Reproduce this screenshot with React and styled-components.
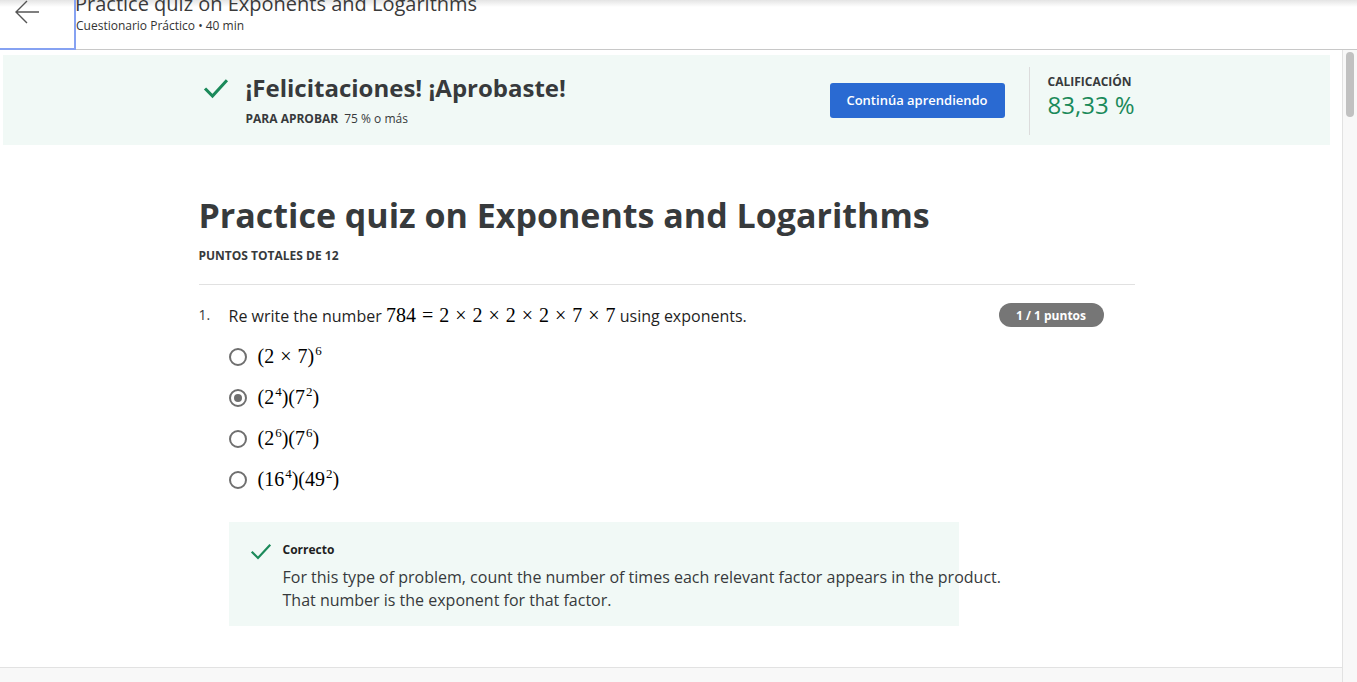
import React from "react";
import styled, { createGlobalStyle } from "styled-components";

const GlobalStyle = createGlobalStyle`
  html, body {
    margin: 0;
    padding: 0;
    height: 682px;
    overflow: hidden;
    background: #ffffff;
    font-family: "Open Sans", "Liberation Sans", sans-serif;
    color: #1f1f1f;
  }
  * { box-sizing: border-box; }
`;

const Page = styled.div`
  width: 1357px;
  height: 682px;
  display: flex;
  flex-direction: column;
`;

const TopBar = styled.header`
  height: 50px;
  flex-shrink: 0;
  display: flex;
  border-bottom: 1px solid #c8c8c8;
  background: linear-gradient(#e4e4e4 0px, #ffffff 7px);
`;

const BackButton = styled.button`
  width: 76px;
  height: 50px;
  margin: 0;
  border: none;
  border-right: 2px solid #86a2f2;
  border-bottom: 2px solid #86a2f2;
  background: transparent;
  display: flex;
  align-items: center;
  justify-content: center;
  padding: 0 20px 24px 0;
  flex-shrink: 0;
`;

const TopInfo = styled.div`
  display: flex;
  flex-direction: column;
  margin-top: -8px;
`;

const TopTitle = styled.div`
  font-size: 20px;
  line-height: 24px;
  color: #3a3a3a;
  white-space: nowrap;
  margin-left: -1px;
`;

const TopSub = styled.div`
  margin-top: 2px;
  font-size: 12px;
  line-height: 16px;
  color: #333;
`;

const Body = styled.div`
  flex: 1;
  display: flex;
  min-height: 0;
`;

const Viewport = styled.div`
  flex: 1;
  display: flex;
  flex-direction: column;
  min-width: 0;
`;

const ScrollArea = styled.main`
  flex: 1;
  overflow: hidden;
  padding: 5px 12px 0 3px;
`;

const HTrack = styled.div`
  height: 15px;
  flex-shrink: 0;
  border-top: 1px solid #e2e2e2;
  background: #f8f8f8;
`;

const VTrack = styled.div`
  width: 15px;
  flex-shrink: 0;
  border-left: 1px solid #e2e2e2;
  background: #f8f8f8;
  padding: 2px 3px 0 3px;
`;

const VThumb = styled.div`
  width: 8px;
  height: 65px;
  border-radius: 4px;
  background: #c1c1c1;
`;

const Banner = styled.section`
  height: 90px;
  background: #f1f9f6;
`;

const Column = styled.div`
  width: 936px;
  margin: 0 auto;
`;

const BannerInner = styled(Column)`
  height: 100%;
  display: flex;
  align-items: center;
`;

const PassBlock = styled.div`
  display: flex;
  align-items: flex-start;
  flex: 1;
  margin-top: -1px;
`;

const CheckMark = ({ size = 28, stroke = 2.6 }) => (
  <svg width={size} height={size} viewBox="0 0 24 24" fill="none">
    <polyline
      points="3.5 12.5 9 18 20.5 5.5"
      stroke="#1b8a5a"
      strokeWidth={stroke}
      strokeLinecap="square"
    />
  </svg>
);

const CheckBox = styled.div`
  margin: 2px 16px 0 3px;
  display: flex;
`;

const PassText = styled.div`
  display: flex;
  flex-direction: column;
`;

const PassTitle = styled.h2`
  margin: 0;
  font-size: 24px;
  line-height: 30px;
  font-weight: 700;
  color: #373a3c;
`;

const PassReq = styled.div`
  margin-top: 8px;
  font-size: 12px;
  line-height: 16px;
  color: #373a3c;
  b {
    font-weight: 700;
    margin-right: 6px;
  }
`;

const PrimaryButton = styled.button`
  width: 175px;
  height: 35px;
  border: none;
  border-radius: 3px;
  background: #2a6ad2;
  color: #ffffff;
  font-family: "Open Sans", "Liberation Sans", sans-serif;
  font-size: 13px;
  font-weight: 600;
`;

const Divider = styled.div`
  width: 1px;
  height: 68px;
  background: #dcdcdc;
  margin: 2px 18px 0 24px;
`;

const Score = styled.div`
  width: 87px;
  align-self: flex-start;
  margin-top: 19px;
  display: flex;
  flex-direction: column;
`;

const ScoreLabel = styled.div`
  font-size: 12px;
  line-height: 16px;
  font-weight: 700;
  color: #373a3c;
`;

const ScoreValue = styled.div`
  margin-top: 2px;
  font-size: 24px;
  line-height: 26px;
  color: #1b8a5a;
  white-space: nowrap;
`;

const QuizTitle = styled.h1`
  margin: 50px 0 0 0;
  font-size: 34px;
  line-height: 40px;
  font-weight: 700;
  color: #373a3c;
  white-space: nowrap;
`;

const TotalPoints = styled.div`
  margin-top: 13px;
  font-size: 12px;
  line-height: 16px;
  font-weight: 700;
  color: #373a3c;
`;

const Rule = styled.hr`
  margin: 20px 0 0 0;
  border: none;
  border-top: 1px solid #e1e1e1;
`;

const QuestionRow = styled.div`
  margin-top: 18px;
  display: flex;
  align-items: flex-start;
`;

const QNumber = styled.div`
  width: 30px;
  font-size: 14px;
  line-height: 24px;
  color: #373a3c;
`;

const QText = styled.div`
  flex: 1;
  font-size: 16px;
  line-height: 24px;
  color: #1f1f1f;
  white-space: nowrap;
`;

const Badge = styled.span`
  margin-right: 31px;
  width: 105px;
  height: 24px;
  border-radius: 12px;
  background: #767676;
  color: #ffffff;
  font-size: 12px;
  font-weight: 700;
  display: flex;
  align-items: center;
  justify-content: center;
`;

const Math = styled.span`
  font-family: "Liberation Serif", "DejaVu Serif", serif;
  font-size: 20px;
  color: #000;
  white-space: nowrap;
  sup {
    font-size: 13px;
    vertical-align: 0;
    position: relative;
    top: -8px;
    margin-left: 1px;
  }
`;

const Op = styled.span`
  margin: 0 6px;
`;

const Options = styled.div`
  margin-top: 8px;
  margin-left: 30px;
  display: flex;
  flex-direction: column;
`;

const Option = styled.label`
  height: 41px;
  display: flex;
  align-items: center;
  gap: 11px;
`;

const Radio = styled.span`
  width: 18px;
  height: 18px;
  border-radius: 50%;
  border: 2px solid #6f6f6f;
  display: flex;
  align-items: center;
  justify-content: center;
  &::after {
    content: "";
    width: 8px;
    height: 8px;
    border-radius: 50%;
    background: ${(p) => (p.checked ? "#6f6f6f" : "transparent")};
  }
`;

const Feedback = styled.div`
  margin: 22px 0 0 30px;
  width: 730px;
  height: 104px;
  background: #f1f9f6;
  padding: 20px 0 0 20px;
  display: flex;
  align-items: flex-start;
`;

const FeedbackIcon = styled.div`
  display: flex;
  margin: -2px 10px 0 0;
`;

const FeedbackBody = styled.div`
  display: flex;
  flex-direction: column;
`;

const FeedbackTitle = styled.div`
  font-size: 12px;
  line-height: 16px;
  font-weight: 700;
  color: #1f1f1f;
`;

const FeedbackText = styled.div`
  margin-top: 8px;
  font-size: 16px;
  line-height: 23px;
  color: #373a3c;
  white-space: nowrap;
`;

const BackArrow = () => (
  <svg width="28" height="28" viewBox="0 0 28 28" fill="none">
    <path d="M26 14H3M14 3L3 14l11 11" stroke="#555" strokeWidth="1.4" />
  </svg>
);

const options = [
  { id: 1, content: <>(2<Op>×</Op>7)<sup>6</sup></> },
  { id: 2, content: <>(2<sup>4</sup>)(7<sup>2</sup>)</>, checked: true },
  { id: 3, content: <>(2<sup>6</sup>)(7<sup>6</sup>)</> },
  { id: 4, content: <>(16<sup>4</sup>)(49<sup>2</sup>)</> },
];

export default function App() {
  return (
    <Page>
      <GlobalStyle />
      <TopBar>
        <BackButton aria-label="Volver">
          <BackArrow />
        </BackButton>
        <TopInfo>
          <TopTitle>Practice quiz on Exponents and Logarithms</TopTitle>
          <TopSub>Cuestionario Práctico • 40 min</TopSub>
        </TopInfo>
      </TopBar>
      <Body>
        <Viewport>
          <ScrollArea>
            <Banner>
              <BannerInner>
                <PassBlock>
                  <CheckBox>
                    <CheckMark />
                  </CheckBox>
                  <PassText>
                    <PassTitle>¡Felicitaciones! ¡Aprobaste!</PassTitle>
                    <PassReq>
                      <b>PARA APROBAR</b>75 % o más
                    </PassReq>
                  </PassText>
                </PassBlock>
                <PrimaryButton>Continúa aprendiendo</PrimaryButton>
                <Divider />
                <Score>
                  <ScoreLabel>CALIFICACIÓN</ScoreLabel>
                  <ScoreValue>83,33 %</ScoreValue>
                </Score>
              </BannerInner>
            </Banner>
            <Column>
              <QuizTitle>Practice quiz on Exponents and Logarithms</QuizTitle>
              <TotalPoints>PUNTOS TOTALES DE 12</TotalPoints>
              <Rule />
              <QuestionRow>
                <QNumber>1.</QNumber>
                <QText>
                  Re write the number{" "}
                  <Math>
                    784<Op>=</Op>2<Op>×</Op>2<Op>×</Op>2<Op>×</Op>2<Op>×</Op>7<Op>×</Op>7
                  </Math>{" "}
                  using exponents.
                </QText>
                <Badge>1 / 1 puntos</Badge>
              </QuestionRow>
              <Options>
                {options.map((o) => (
                  <Option key={o.id}>
                    <Radio checked={o.checked} />
                    <Math>{o.content}</Math>
                  </Option>
                ))}
              </Options>
              <Feedback>
                <FeedbackIcon>
                  <CheckMark size={24} stroke={2.2} />
                </FeedbackIcon>
                <FeedbackBody>
                  <FeedbackTitle>Correcto</FeedbackTitle>
                  <FeedbackText>
                    For this type of problem, count the number of times each relevant factor appears in the product.
                    <br />
                    That number is the exponent for that factor.
                  </FeedbackText>
                </FeedbackBody>
              </Feedback>
            </Column>
          </ScrollArea>
          <HTrack />
        </Viewport>
        <VTrack>
          <VThumb />
        </VTrack>
      </Body>
    </Page>
  );
}
